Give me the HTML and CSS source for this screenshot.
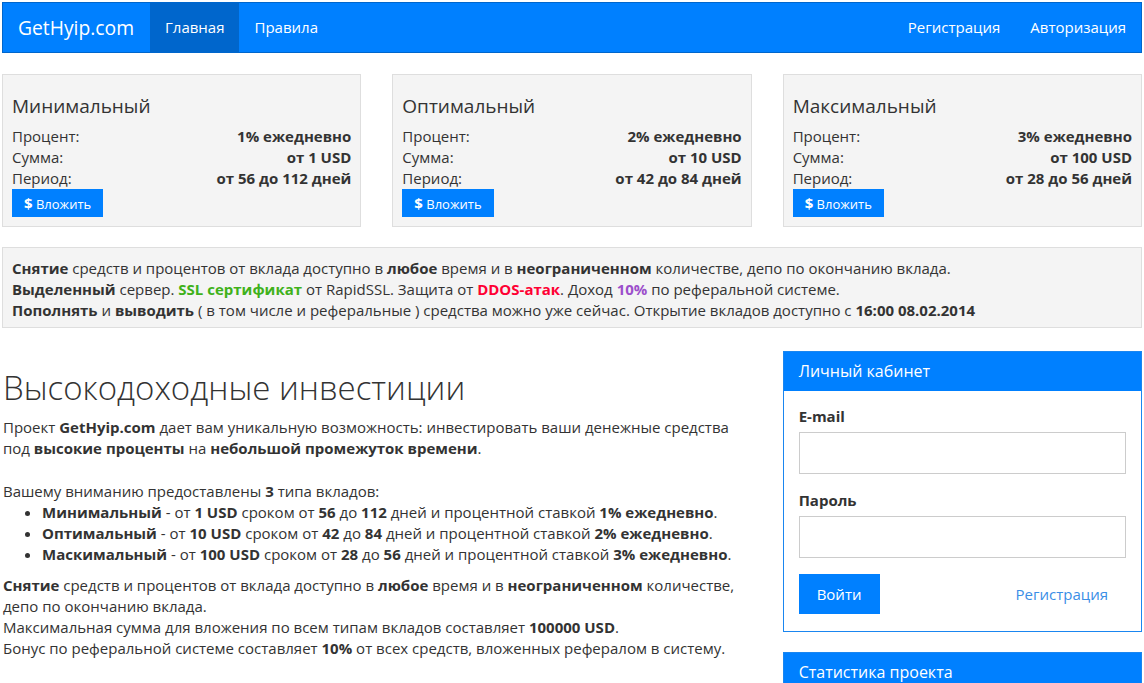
FILE: index.html
```html
<!DOCTYPE html>
<html lang="ru">

<head>
    <meta charset="UTF-8">
    <meta name="viewport" content="width=device-width, initial-scale=1.0">
    <title>GetHyip.com</title>
    <link rel="stylesheet" href="styles.css">
</head>

<body>
    <!-- Navbar -->
    <div class="navbar">
        <a href="#" class="brand">GetHyip.com</a>
        <ul class="nav">
            <li class="active"><a href="#">Главная</a></li>
            <li><a href="#">Правила</a></li>
        </ul>
        <ul class="nav nav-right">
            <li><a href="#">Регистрация</a></li>
            <li><a href="#">Авторизация</a></li>
        </ul>
    </div>

    <!-- Plans -->
    <div class="plans">
        <div class="plan">
            <h3>Минимальный</h3>
            <div class="row"><span>Процент:</span><b>1% ежедневно</b></div>
            <div class="row"><span>Сумма:</span><b>от 1 USD</b></div>
            <div class="row"><span>Период:</span><b>от 56 до 112 дней</b></div>
            <button class="btn-invest"><b>$</b> Вложить</button>
        </div>
        <div class="plan">
            <h3>Оптимальный</h3>
            <div class="row"><span>Процент:</span><b>2% ежедневно</b></div>
            <div class="row"><span>Сумма:</span><b>от 10 USD</b></div>
            <div class="row"><span>Период:</span><b>от 42 до 84 дней</b></div>
            <button class="btn-invest"><b>$</b> Вложить</button>
        </div>
        <div class="plan">
            <h3>Максимальный</h3>
            <div class="row"><span>Процент:</span><b>3% ежедневно</b></div>
            <div class="row"><span>Сумма:</span><b>от 100 USD</b></div>
            <div class="row"><span>Период:</span><b>от 28 до 56 дней</b></div>
            <button class="btn-invest"><b>$</b> Вложить</button>
        </div>
    </div>

    <div class="info">
        <b>Снятие</b> средств и процентов от вклада доступно в <b>любое</b> время и в <b>неограниченном</b> количестве, депо по окончанию вклада.<br>
        <b>Выделенный</b> сервер. <b class="green">SSL сертификат</b> от RapidSSL. Защита от <b class="red">DDOS-атак</b>. Доход <b class="purple">10%</b> по реферальной системе.<br>
        <b>Пополнять</b> и <b>выводить</b> ( в том числе и реферальные ) средства можно уже сейчас. Открытие вкладов доступно с <b>16:00 08.02.2014</b>
    </div>

    <div class="main">
        <div class="content">
            <h1>Высокодоходные инвестиции</h1>
            <p>Проект <b>GetHyip.com</b> дает вам уникальную возможность: инвестировать ваши денежные средства под <b>высокие проценты</b> на <b>небольшой промежуток времени</b>.</p>
            <p class="lead-in">Вашему вниманию предоставлены <b>3</b> типа вкладов:</p>
            <ul>
                <li><b>Минимальный</b> - от <b>1 USD</b> сроком от <b>56</b> до <b>112</b> дней и процентной ставкой <b>1% ежедневно</b>.</li>
                <li><b>Оптимальный</b> - от <b>10 USD</b> сроком от <b>42</b> до <b>84</b> дней и процентной ставкой <b>2% ежедневно</b>.</li>
                <li><b>Маскимальный</b> - от <b>100 USD</b> сроком от <b>28</b> до <b>56</b> дней и процентной ставкой <b>3% ежедневно</b>.</li>
            </ul>
            <p><b>Снятие</b> средств и процентов от вклада доступно в <b>любое</b> время и в <b>неограниченном</b> количестве, депо по окончанию вклада.<br>
                Максимальная сумма для вложения по всем типам вкладов составляет <b>100000 USD</b>.<br>
                Бонус по реферальной системе составляет <b>10%</b> от всех средств, вложенных рефералом в систему.</p>
        </div>

        <div class="sidebar">
            <div class="panel">
                <div class="panel-heading">Личный кабинет</div>
                <div class="panel-body">
                    <label>E-mail</label>
                    <input type="text">
                    <label>Пароль</label>
                    <input type="password">
                    <div class="form-actions">
                        <button class="btn-login">Войти</button>
                        <a href="#" class="reg-link">Регистрация</a>
                    </div>
                </div>
            </div>
            <div class="panel">
                <div class="panel-heading">Статистика проекта</div>
                <div class="panel-body"></div>
            </div>
        </div>
    </div>
</body>

</html>
```

FILE: styles.css
```css
* {
    box-sizing: border-box;
}

body {
    margin: 0;
    padding: 2px;
    font-family: "Open Sans", "Noto Sans", sans-serif;
    font-size: 15px;
    line-height: 21px;
    color: #333;
    background: #fff;
}

b {
    font-weight: 700;
}

/* Navbar */
.navbar {
    display: flex;
    align-items: stretch;
    height: 51px;
    background: #0080ff;
    border: 1px solid #0066cc;
}

.brand {
    display: flex;
    align-items: center;
    padding: 0 16px 0 15px;
    font-size: 19.3px;
    color: #fff;
    text-decoration: none;
}

.nav {
    display: flex;
    margin: 0;
    padding: 0;
    list-style: none;
}

.nav-right {
    margin-left: auto;
}

.nav li a {
    display: flex;
    align-items: center;
    height: 100%;
    padding: 0 15px;
    font-size: 15px;
    color: #fff;
    text-decoration: none;
}

.nav li.active a {
    background: #0066cc;
}

/* Plans */
.plans {
    display: grid;
    grid-template-columns: repeat(3, 1fr);
    gap: 31px;
    margin-top: 21px;
}

.plan {
    background: #f4f4f4;
    border: 1px solid #dedede;
    padding: 10px 9px 9px 9px;
}

.plan h3 {
    margin: 10px 0 9px;
    font-size: 19px;
    line-height: 22px;
    font-weight: 400;
}

.plan .row {
    display: flex;
    justify-content: space-between;
}

.btn-invest {
    display: block;
    height: 28px;
    padding: 0 12px;
    border: 0;
    background: #0080ff;
    color: #fff;
    font-family: inherit;
    font-size: 13px;
    cursor: pointer;
}

.btn-invest b {
    font-size: 15px;
}

/* Info */
.info {
    margin-top: 20px;
    background: #f4f4f4;
    border: 1px solid #dedede;
    padding: 10px 9px 6px;
}

.green {
    color: #3fb11a;
}

.red {
    color: #ff0033;
}

.purple {
    color: #9c4fcb;
}

/* Main */
.main {
    display: grid;
    grid-template-columns: repeat(3, 1fr);
    gap: 31px;
    margin-top: 23px;
}

.content {
    grid-column: span 2;
    padding-left: 1px;
}

.content h1 {
    margin: 19px 0 12px;
    font-size: 33px;
    line-height: 35px;
    font-weight: 300;
}

.content p {
    margin: 0 0 22px;
}

.content p.lead-in {
    margin: 0;
}

.content ul {
    margin: 0 0 10px;
    padding-left: 39px;
}

/* Sidebar */
.panel {
    border: 1px solid #1a86f0;
    margin-bottom: 20px;
}

.panel-heading {
    height: 39px;
    padding: 0 15px;
    display: flex;
    align-items: center;
    background: #0080ff;
    color: #fff;
    font-size: 16px;
}

.panel-body {
    padding: 15px 15px 17px;
    display: flex;
    flex-direction: column;
}

.panel-body label {
    font-weight: 700;
    font-size: 15px;
    line-height: 21px;
    margin-bottom: 5px;
}

.panel-body input {
    height: 42px;
    border: 1px solid #ccc;
    margin-bottom: 16px;
    font-family: inherit;
    font-size: 15px;
    padding: 6px 10px;
}

.form-actions {
    display: flex;
    align-items: center;
    justify-content: space-between;
    padding-right: 18px;
}

.btn-login {
    height: 40px;
    padding: 0 18px;
    border: 0;
    background: #0080ff;
    color: #fff;
    font-family: inherit;
    font-size: 15px;
    cursor: pointer;
}

.reg-link {
    color: #3a8ee6;
    font-size: 15px;
    text-decoration: none;
}
```
